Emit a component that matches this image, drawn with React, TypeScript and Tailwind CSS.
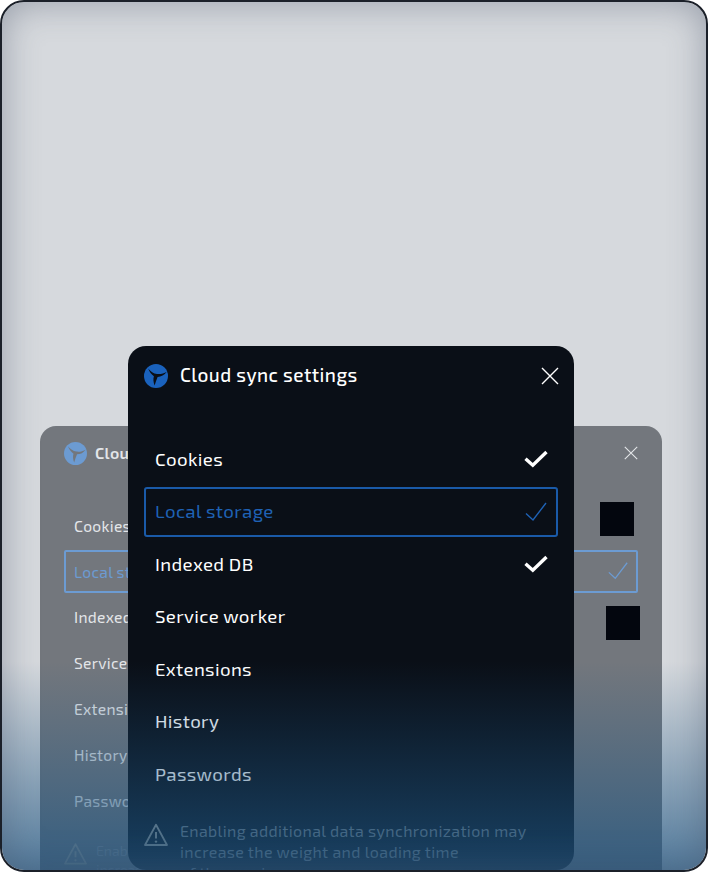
const font = "font-['Exo_2','Open_Sans','Noto_Sans',sans-serif]";

const rows = ["Cookies", "Local storage", "Indexed DB", "Service worker", "Extensions", "History", "Passwords"];

const Logo = ({ className, color, cut }: { className: string; color: string; cut: string }) => (
  <svg viewBox="0 0 24 24" className={className}>
    <circle cx="12" cy="12" r="12" fill={color} />
    <path
      d="M4.2 4.5C6.5 7.5 9.5 9.6 13 10 16.5 10.4 20 9.5 22.7 7.7 20.5 11 17 12.8 13.6 12.9 12.4 15.5 11.5 18.6 10.6 21.4 9.4 18 9 15 9.9 12.2 7.6 10.4 5.2 7.8 4.2 4.5Z"
      fill={cut}
    />
  </svg>
);

const Tick = ({ className, stroke }: { className: string; stroke: string }) => (
  <svg viewBox="0 0 24 24" className={className} fill="none" stroke={stroke} strokeWidth={1.4}>
    <path d="M2 13.5 9 20 22 3" />
  </svg>
);

const BoldTick = ({ className }: { className: string }) => (
  <svg viewBox="0 0 24 24" className={className} fill="none" stroke="#ffffff" strokeWidth={3.4}>
    <path d="M1.5 11.8 8.8 18.2 22.5 5" />
  </svg>
);

const Warning = ({ className }: { className: string }) => (
  <svg viewBox="0 0 24 24" className={className} fill="none" stroke="currentColor" strokeWidth="1.8" strokeLinejoin="round">
    <path d="M12 1.8 23 22H1Z" />
    <path d="M12 9v6.5" strokeWidth="2" />
    <circle cx="12" cy="18.6" r="1.2" fill="currentColor" stroke="none" />
  </svg>
);

const Close = ({ className }: { className: string }) => (
  <svg viewBox="0 0 18 18" className={className} fill="none" stroke="currentColor" strokeWidth="1.4">
    <path d="M1 1 17 17M17 1 1 17" />
  </svg>
);

const BackCard = () => (
  <div className="ml-[38px] mt-[424px] h-[480px] w-[622px] rounded-[16px] bg-[#73777d] px-[24px] text-[#e4e6e9]">
    <div className="flex h-[54px] items-center">
      <Logo className="h-[23px] w-[23px]" color="#6c9bd2" cut="#73777d" />
      <span className="ml-[8px] text-[16px] font-semibold tracking-[0.3px]">Cloud sync settings</span>
      <Close className="ml-auto mr-0 h-[14px] w-[14px]" />
    </div>
    <div className="mt-[24px] flex flex-col gap-[2.8px]">
      {rows.map((row, i) => (
        <div
          key={row}
          className={`flex h-[43px] items-center px-[8px] text-[15.6px] tracking-[0.3px] ${
            i === 1 ? "rounded-[2px] border-2 border-[#6c9bd2] text-[#6c9bd2]" : "border-2 border-transparent"
          }`}
        >
          {row}
          {i === 1 && <Tick className="ml-auto mr-[-1px] h-[22px] w-[22px]" stroke="#6c9bd2" />}
          {i === 0 && <span className="ml-auto mr-[-6px] mt-[-14px] h-[34px] w-[34px] bg-[#03060e]" />}
          {i === 2 && <span className="ml-auto mr-[-12px] mt-[12px] h-[34px] w-[34px] bg-[#03060e]" />}
        </div>
      ))}
    </div>
    <div className="mt-[19px] flex items-start gap-[9px] text-[14px] leading-[19px] text-[#8e9299]">
      <Warning className="mt-[1px] h-[24px] w-[23px] shrink-0 text-[#a09c94]" />
      <p className="[word-spacing:44px]">Enabling additional data synchronization may increase the weight</p>
    </div>
  </div>
);

const FrontCard = () => (
  <div className="absolute left-[126px] top-[344px] h-[524px] w-[446px] rounded-[18px] bg-[#0a0f17] px-[16px] text-white">
    <div className="flex h-[59px] items-center">
      <Logo className="h-[24px] w-[24px]" color="#1a62bd" cut="#0a0f17" />
      <span className="ml-[12px] text-[19px] font-medium tracking-[0.45px]">Cloud sync settings</span>
      <Close className="ml-auto mr-[-1px] h-[18px] w-[18px]" />
    </div>
    <div className="mt-[29px] flex flex-col gap-[2.5px]">
      {rows.map((row, i) => (
        <div
          key={row}
          className={`flex h-[50px] items-center px-[9px] text-[18.7px] tracking-[0.35px] ${
            i === 1 ? "rounded-[3px] border-2 border-[#1a5aa8] text-[#1f62b5]" : "border-2 border-transparent"
          }`}
        >
          {row}
          {i === 1 && <Tick className="ml-auto mr-[-1px] h-[24px] w-[24px]" stroke="#1f62b5" />}
          {(i === 0 || i === 2) && <BoldTick className="ml-auto mr-[-1px] h-[24px] w-[24px]" />}
        </div>
      ))}
    </div>
    <div className="mt-[21px] flex items-start gap-[12px] text-[16px] leading-[21px] tracking-[0.35px] text-[#7b8289]">
      <Warning className="mt-[2px] h-[26px] w-[24px] shrink-0 text-[#a09c94]" />
      <p>
        Enabling additional data synchronization may
        <br />
        increase the weight and loading time
        <br />
        of the service
      </p>
    </div>
  </div>
);

export default function App() {
  return (
    <div className={`${font} h-[872px] w-[708px] overflow-hidden bg-white`}>
      <div className="relative h-[872px] w-[708px] overflow-hidden rounded-[24px] border-2 border-[#1b2029] bg-[#d6d9dd]">
        <BackCard />
        <FrontCard />
        {/* bottom fade and edge shade over everything */}
        <div className="pointer-events-none absolute inset-0 rounded-[22px] bg-gradient-to-b from-[#1e558200] from-[76%] to-[#1e5582b8] shadow-[inset_0_0_36px_rgba(70,82,105,0.45)]" />
      </div>
    </div>
  );
}
